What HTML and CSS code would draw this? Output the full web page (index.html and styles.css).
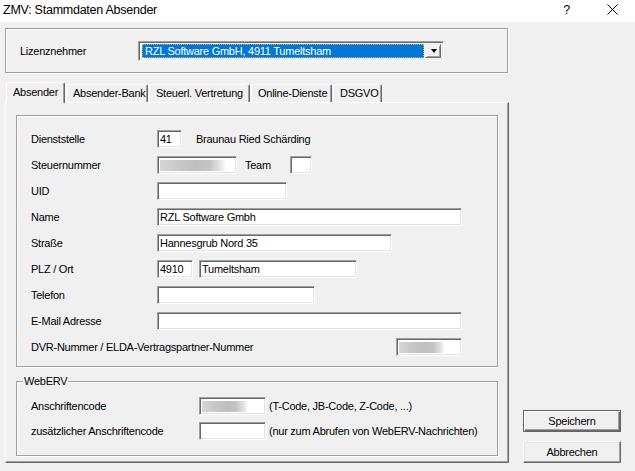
FILE: index.html
```html
<!DOCTYPE html>
<html lang="de">
<head>
<meta charset="utf-8">
<title>ZMV: Stammdaten Absender</title>
<link rel="stylesheet" href="styles.css">
</head>
<body>
<div class="window">
  <header class="titlebar">
    <span class="title">ZMV: Stammdaten Absender</span>
    <span class="tb-btn tb-help">?</span>
    <span class="tb-btn tb-close">
      <svg width="11" height="11" viewBox="0 0 11 11"><path d="M0.5 0.5 L10.5 10.5 M10.5 0.5 L0.5 10.5" stroke="#000" stroke-width="1" fill="none"/></svg>
    </span>
  </header>
  <div class="client">
    <div class="leftcol">
      <div class="group lizenz">
        <span class="lizenz-label">Lizenznehmer</span>
        <div class="combo">
          <div class="combo-field"><span class="combo-sel">RZL Software GmbH, 4911 Tumeltsham</span></div>
          <div class="combo-btn"><span class="tri"></span></div>
        </div>
      </div>

      <div class="tabs">
        <div class="tab active">Absender</div>
        <div class="tab t-bank">Absender-Bank</div>
        <div class="tab t-steuer">Steuerl. Vertretung</div>
        <div class="tab t-online">Online-Dienste</div>
        <div class="tab t-dsgvo">DSGVO</div>
      </div>

      <div class="panel">
        <div class="group form">
          <span class="lbl">Dienststelle</span>
          <div class="field">
            <span class="edit w-ds">41</span>
            <span class="info">Braunau Ried Schärding</span>
          </div>

          <span class="lbl">Steuernummer</span>
          <div class="field">
            <span class="edit w-stnr"><span class="blur b-stnr"></span></span>
            <span class="team-lbl">Team</span>
            <span class="edit w-team"></span>
          </div>

          <span class="lbl">UID</span>
          <div class="field"><span class="edit w-uid"></span></div>

          <span class="lbl">Name</span>
          <div class="field"><span class="edit w-long">RZL Software Gmbh</span></div>

          <span class="lbl">Straße</span>
          <div class="field"><span class="edit w-str">Hannesgrub Nord 35</span></div>

          <span class="lbl">PLZ / Ort</span>
          <div class="field">
            <span class="edit w-plz">4910</span>
            <span class="edit w-ort">Tumeltsham</span>
          </div>

          <span class="lbl">Telefon</span>
          <div class="field"><span class="edit w-tel"></span></div>

          <span class="lbl">E-Mail Adresse</span>
          <div class="field"><span class="edit w-long"></span></div>

          <div class="dvr-row">
            <span class="lbl">DVR-Nummer / ELDA-Vertragspartner-Nummer</span>
            <span class="edit w-dvr"><span class="blur b-dvr"></span></span>
          </div>
        </div>

        <div class="group weberv">
          <span class="legend">WebERV</span>
          <div class="wgrid">
            <span class="lbl">Anschriftencode</span>
            <span class="edit w-code"><span class="blur b-code"></span></span>
            <span class="hint">(T-Code, JB-Code, Z-Code, ...)</span>

            <span class="lbl">zusätzlicher Anschriftencode</span>
            <span class="edit w-code"></span>
            <span class="hint">(nur zum Abrufen von WebERV-Nachrichten)</span>
          </div>
        </div>
      </div>
    </div>

    <div class="rightcol">
      <button class="btn default" type="button">Speichern</button>
      <button class="btn" type="button">Abbrechen</button>
    </div>
  </div>
</div>
</body>
</html>
```

FILE: styles.css
```css
html, body {
  margin: 0;
  padding: 0;
}

body {
  width: 635px;
  height: 471px;
  overflow: hidden;
  background: #f0f0f0;
  font-family: "Liberation Sans", Arial, sans-serif;
  font-size: 11px;
  letter-spacing: -0.25px;
  color: #000;
}

.window {
  display: flex;
  flex-direction: column;
  height: 471px;
}

/* ---------- title bar ---------- */
.titlebar {
  height: 22px;
  background: #fff;
  display: flex;
  align-items: flex-start;
}

.title {
  font-size: 12.5px;
  letter-spacing: -0.25px;
  padding: 3px 0 0 3px;
  line-height: 14px;
  flex: 1;
}

.tb-btn {
  width: 45px;
  height: 20px;
  display: flex;
  justify-content: center;
  align-items: flex-start;
}

.tb-help {
  font-size: 12.5px;
  line-height: 14px;
  padding-top: 3px;
  height: 17px;
}

.tb-close {
  padding-top: 4px;
  height: 16px;
  padding-left: 1px;
}

/* ---------- client area ---------- */
.client {
  flex: 1;
  display: flex;
  padding: 0 0 8px 5px;
  gap: 14px;
}

.leftcol {
  width: 504px;
  display: flex;
  flex-direction: column;
  padding-top: 6px;
}

.rightcol {
  width: 98px;
  display: flex;
  flex-direction: column;
  justify-content: flex-end;
  gap: 9px;
}

/* etched group box */
.group {
  border: 1px solid #a0a0a0;
  box-shadow: inset 1px 1px 0 #fff, 1px 1px 0 #fff;
  box-sizing: border-box;
}

/* ---------- Lizenznehmer ---------- */
.lizenz {
  width: 503px;
  height: 45px;
  display: flex;
  align-items: center;
  padding-left: 14px;
}

.lizenz-label {
  width: 118px;
}

.combo {
  width: 306px;
  height: 20px;
  box-sizing: border-box;
  border-top: 1px solid #a0a0a0;
  border-left: 1px solid #a0a0a0;
  border-right: 1px solid #fff;
  border-bottom: 1px solid #fff;
  box-shadow: inset 1px 1px 0 #696969, inset -1px -1px 0 #e3e3e3;
  background: #fff;
  display: flex;
  padding: 2px 2px 2px 2px;
}

.combo-field {
  flex: 1;
  padding: 0 1px 0 1px;
  display: flex;
}

.combo-sel {
  flex: 1;
  background: #0078d7;
  color: #fff;
  border: 1px dotted #d9a25a;
  line-height: 12px;
  padding-left: 2px;
  white-space: nowrap;
  overflow: hidden;
}

.combo-btn {
  width: 16px;
  box-sizing: border-box;
  background: #f0f0f0;
  border-top: 1px solid #e3e3e3;
  border-left: 1px solid #e3e3e3;
  border-right: 1px solid #696969;
  border-bottom: 1px solid #696969;
  box-shadow: inset 1px 1px 0 #fff, inset -1px -1px 0 #a0a0a0;
  display: flex;
  align-items: center;
  justify-content: center;
}

.tri {
  width: 0;
  height: 0;
  border-left: 3.5px solid transparent;
  border-right: 3.5px solid transparent;
  border-top: 4px solid #000;
  margin-left: 1px;
}

/* ---------- tabs ---------- */
.tabs {
  margin-top: 9px;
  height: 20px;
  display: flex;
  align-items: flex-end;
  padding-left: 1px;
  position: relative;
  z-index: 1;
}

.tab {
  height: 18px;
  box-sizing: border-box;
  border-top: 1px solid #fff;
  border-left: 1px solid #fff;
  border-right: 1px solid #696969;
  box-shadow: inset -1px 0 0 #a0a0a0;
  border-radius: 2px 2px 0 0;
  padding: 2px 5px 0 6px;
  line-height: 13px;
  white-space: nowrap;
  background: #f0f0f0;
  margin-top: 2px;
}

.tab.active {
  height: 21px;
  margin-bottom: -1px;
  padding: 3px 6px 0 6px;
  width: 59px;
}

.t-bank { width: 82px; margin-left: 1px; }
.t-steuer { width: 101px; margin-left: 1px; }
.t-online { width: 81px; margin-left: 1px; }
.t-dsgvo { width: 49px; margin-left: 1px; }

/* ---------- tab panel ---------- */
.panel {
  width: 504px;
  height: 361px;
  box-sizing: border-box;
  border-top: 1px solid #fff;
  border-left: 1px solid #fff;
  border-right: 1px solid #696969;
  border-bottom: 1px solid #696969;
  box-shadow: inset -1px -1px 0 #a0a0a0;
  padding: 12px 10px 0 10px;
}

/* ---------- form ---------- */
.form {
  height: 252px;
  display: grid;
  grid-template-columns: 126px 305px;
  grid-auto-rows: 18px;
  row-gap: 8px;
  padding: 14px 0 0 14px;
  align-items: center;
}

.lbl {
  white-space: nowrap;
  line-height: 13px;
}

.field {
  display: flex;
  align-items: center;
  height: 18px;
}

.edit {
  height: 18px;
  box-sizing: border-box;
  border-top: 1px solid #a0a0a0;
  border-left: 1px solid #a0a0a0;
  border-right: 1px solid #fff;
  border-bottom: 1px solid #fff;
  box-shadow: inset 1px 1px 0 #696969, inset -1px -1px 0 #e3e3e3;
  background: #fff;
  padding: 2px 0 0 2px;
  line-height: 13px;
  white-space: nowrap;
  display: block;
  flex: none;
}

.w-ds { width: 25px; }
.w-stnr { width: 80px; }
.w-team { width: 22px; }
.w-uid { width: 130px; }
.w-long { width: 305px; }
.w-str { width: 235px; }
.w-plz { width: 36px; }
.w-ort { width: 158px; margin-left: 6px; }
.w-tel { width: 158px; }
.w-dvr { width: 66px; }
.w-code { width: 67px; }

.info {
  margin-left: 14px;
}

.team-lbl {
  width: 45px;
  margin-left: 8px;
}

.dvr-row {
  grid-column: 1 / -1;
  display: flex;
  justify-content: space-between;
  align-items: center;
  width: 431px;
}

.blur {
  display: block;
  height: 11px;
  margin-top: 1px;
  background: linear-gradient(90deg, #d6d6d6 0%, #c9c9c9 25%, #bfbfbf 55%, #c4c4c4 75%, #e6e6e6 92%, #ffffff 100%);
}

.b-stnr { width: 66px; }
.b-dvr { width: 46px; }
.b-code { width: 46px; }

/* ---------- WebERV ---------- */
.weberv {
  margin-top: 14px;
  height: 75px;
  padding: 0 0 0 14px;
}

.legend {
  display: block;
  width: max-content;
  margin: -7px 0 0 -8px;
  padding: 0 1px;
  line-height: 13px;
  background: #f0f0f0;
}

.wgrid {
  margin-top: 9px;
  display: grid;
  grid-template-columns: 168px 67px max-content;
  grid-auto-rows: 18px;
  row-gap: 7px;
  align-items: center;
}

.hint {
  margin-left: 3px;
  white-space: nowrap;
}

/* ---------- buttons ---------- */
.btn {
  width: 98px;
  height: 22px;
  box-sizing: border-box;
  margin: 0;
  font: inherit;
  letter-spacing: inherit;
  color: #000;
  background: #f0f0f0;
  border-top: 1px solid #fff;
  border-left: 1px solid #fff;
  border-right: 1px solid #696969;
  border-bottom: 1px solid #696969;
  box-shadow: inset -1px -1px 0 #a0a0a0, inset 1px 1px 0 #e3e3e3;
  padding: 0;
  line-height: 13px;
}

.btn.default {
  border: 1px solid #646464;
  box-shadow: inset 1px 1px 0 #fff, inset -1px -1px 0 #696969, inset -2px -2px 0 #a0a0a0;
}
```
